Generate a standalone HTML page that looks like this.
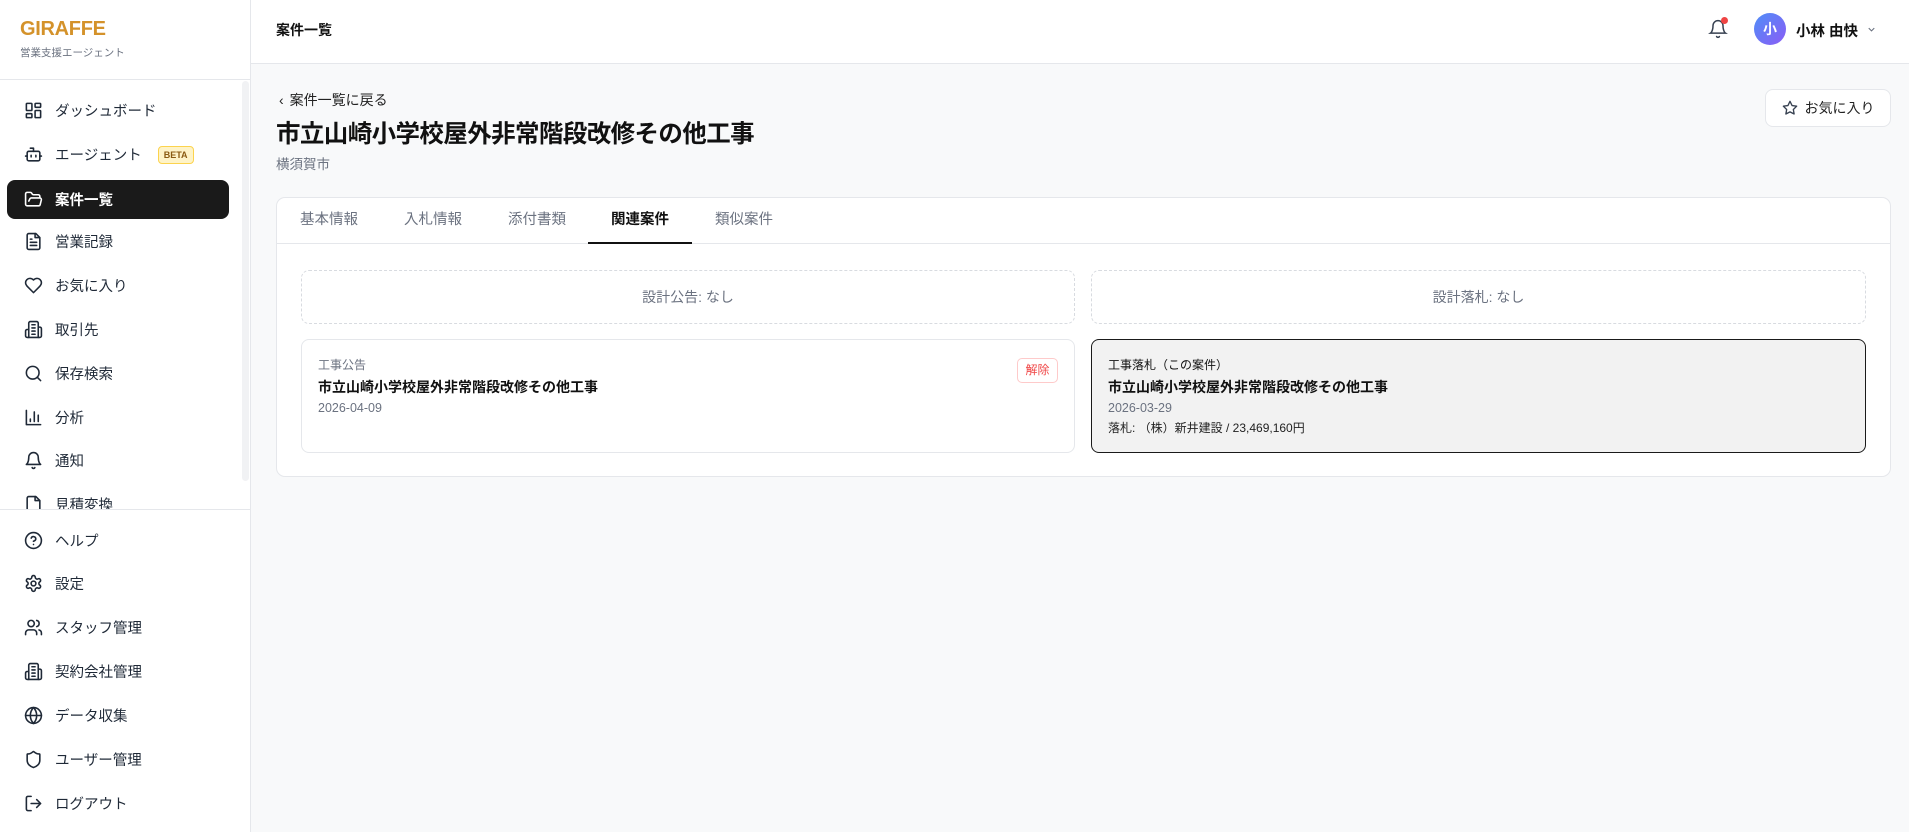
<!DOCTYPE html>
<html><head><meta charset="utf-8"><style>
*{box-sizing:border-box;margin:0;padding:0}
body{width:1909px;height:832px;overflow:hidden;font-family:"Liberation Sans","Noto Sans CJK JP",sans-serif;background:#f8f9fa;color:#111;position:relative}
.sb{position:absolute;left:0;top:0;width:251px;height:832px;background:#fff;border-right:1px solid #e5e7eb}
.logo{position:absolute;left:20px;top:18px;font-weight:700;font-size:20px;color:#d4922a;letter-spacing:-0.3px}
.logosub{position:absolute;left:20px;top:45px;font-size:10.5px;color:#6b7280}
.div1{position:absolute;left:0;top:79px;width:250px;height:1px;background:#e5e7eb}
.div2{position:absolute;left:0;top:509px;width:250px;height:1px;background:#e5e7eb}
.scroll{position:absolute;left:242px;top:81px;width:7px;height:400px;background:#f1f2f4;border-radius:4px}
.nav{position:absolute;left:0;width:250px;overflow:hidden}
.it{position:absolute;left:7px;width:222px;height:39px;display:flex;align-items:center;padding-left:17px;font-size:14.5px;color:#1f2937}
.it svg{width:19px;height:19px;margin-right:12px;fill:none;stroke:#1f2937;stroke-width:2;stroke-linecap:round;stroke-linejoin:round;flex:none}
.it.act{background:#1a1a1a;color:#fff;border-radius:8px;font-weight:700}
.it.act svg{stroke:#fff}
.beta{margin-left:16px;font-size:9px;font-weight:700;color:#8a5a12;background:#fef3c7;border:1px solid #fcd34d;border-radius:4px;padding:3px 5px}
.hd{position:absolute;left:251px;top:0;right:0;height:64px;background:#fff;border-bottom:1px solid #e5e7eb}
.hd .t{position:absolute;left:25px;top:20px;font-size:14px;font-weight:700}
.av{position:absolute;left:1754px;top:13px;width:32px;height:32px;border-radius:50%;background:linear-gradient(135deg,#4f8ef7,#8b5cf6);color:#fff;font-size:14px;display:flex;align-items:center;justify-content:center;font-weight:700}
.nm{position:absolute;left:1796px;top:20px;font-size:14.5px;font-weight:700}
.back{position:absolute;left:279px;top:90px;font-size:14px;color:#222}
.title{position:absolute;left:276px;top:115px;font-size:24.5px;font-weight:700;letter-spacing:-0.6px}
.city{position:absolute;left:276px;top:153px;font-size:13.5px;color:#6b7280}
.fav{position:absolute;left:1765px;top:89px;width:126px;height:38px;background:#fff;border:1px solid #e5e7eb;border-radius:8px;display:flex;align-items:center;justify-content:center;font-size:14px;color:#222}
.card{position:absolute;left:276px;top:197px;width:1615px;height:280px;background:#fff;border:1px solid #e5e7eb;border-radius:9px}
.tabs{position:absolute;left:0;top:0;right:0;height:46px;border-bottom:1px solid #e5e7eb}
.tab{position:absolute;top:0;width:104px;height:46px;text-align:center;line-height:44px;font-size:14.5px;color:#6b7280}
.tab.a{color:#111;font-weight:700;border-bottom:2px solid #111}
.dash{position:absolute;top:72px;height:54px;border:1px dashed #d8dbe0;border-radius:8px;text-align:center;line-height:52px;font-size:14px;color:#6b7280}
.rc{position:absolute;top:141px;height:114px;border:1px solid #e5e7eb;border-radius:8px;padding:15px 16px}
.rc .l{font-size:12px;color:#6b7280;margin-top:1px}
.rc .h{font-size:14px;font-weight:700;margin-top:4px}
.rc .d{font-size:12.5px;color:#6b7280;margin-top:4px}
.rc .w{font-size:12px;color:#222;margin-top:4px}
.rm{position:absolute;right:16px;top:18px;width:41px;height:25px;border:1px solid #fecaca;border-radius:5px;color:#ef4444;font-size:12px;text-align:center;line-height:23px}
</style></head><body>
<div class="sb">
<div class="logo">GIRAFFE</div>
<div class="logosub">営業支援エージェント</div>
<div class="div1"></div>
<div class="scroll"></div>
<div class="nav" style="top:80px;height:429px">
<div class="it" style="top:11px"><svg viewBox="0 0 24 24"><rect x="3" y="3" width="7" height="9" rx="1"/><rect x="14" y="3" width="7" height="5" rx="1"/><rect x="14" y="12" width="7" height="9" rx="1"/><rect x="3" y="16" width="7" height="5" rx="1"/></svg>ダッシュボード</div>
<div class="it" style="top:55px"><svg viewBox="0 0 24 24"><path d="M12 8V4H8"/><rect x="4" y="8" width="16" height="12" rx="2"/><path d="M2 14h2M20 14h2M15 13v2M9 13v2"/></svg>エージェント<span class="beta">BETA</span></div>
<div class="it act" style="top:100px"><svg viewBox="0 0 24 24"><path d="M6 14l1.5-2.9A2 2 0 0 1 9.2 10H20a2 2 0 0 1 1.9 2.5l-1.5 6A2 2 0 0 1 18.5 20H4a2 2 0 0 1-2-2V5a2 2 0 0 1 2-2h3.9a2 2 0 0 1 1.7.9l.8 1.2a2 2 0 0 0 1.7.9H18a2 2 0 0 1 2 2v2"/></svg>案件一覧</div>
<div class="it" style="top:142px"><svg viewBox="0 0 24 24"><path d="M15 2H6a2 2 0 0 0-2 2v16a2 2 0 0 0 2 2h12a2 2 0 0 0 2-2V7z"/><path d="M14 2v5h5M16 13H8M16 17H8M10 9H8"/></svg>営業記録</div>
<div class="it" style="top:186px"><svg viewBox="0 0 24 24"><path d="M19 14c1.5-1.5 3-3.2 3-5.5A5.5 5.5 0 0 0 16.5 3c-1.8 0-3 .5-4.5 2-1.5-1.5-2.7-2-4.5-2A5.5 5.5 0 0 0 2 8.5c0 2.3 1.5 4 3 5.5l7 7z"/></svg>お気に入り</div>
<div class="it" style="top:230px"><svg viewBox="0 0 24 24"><path d="M6 22V4a2 2 0 0 1 2-2h8a2 2 0 0 1 2 2v18z"/><path d="M6 12H4a2 2 0 0 0-2 2v6a2 2 0 0 0 2 2h2M18 9h2a2 2 0 0 1 2 2v9a2 2 0 0 1-2 2h-2M10 6h4M10 10h4M10 14h4M10 18h4"/></svg>取引先</div>
<div class="it" style="top:274px"><svg viewBox="0 0 24 24"><circle cx="11" cy="11" r="8"/><path d="M21 21l-4.3-4.3"/></svg>保存検索</div>
<div class="it" style="top:318px"><svg viewBox="0 0 24 24"><path d="M3 3v18h18M18 17V9M13 17V5M8 17v-3"/></svg>分析</div>
<div class="it" style="top:361px"><svg viewBox="0 0 24 24"><path d="M6 8a6 6 0 0 1 12 0c0 7 3 9 3 9H3s3-2 3-9M10.3 21a1.9 1.9 0 0 0 3.4 0"/></svg>通知</div>
<div class="it" style="top:405px"><svg viewBox="0 0 24 24"><path d="M15 2H6a2 2 0 0 0-2 2v16a2 2 0 0 0 2 2h12a2 2 0 0 0 2-2V7z"/><path d="M14 2v5h5"/></svg>見積変換</div>
</div>
<div class="div2"></div>
<div class="nav" style="top:510px;height:322px">
<div class="it" style="top:11px"><svg viewBox="0 0 24 24"><circle cx="12" cy="12" r="10"/><path d="M9.1 9a3 3 0 0 1 5.8 1c0 2-3 3-3 3M12 17h.01"/></svg>ヘルプ</div>
<div class="it" style="top:54px"><svg viewBox="0 0 24 24"><circle cx="12" cy="12" r="3"/><path d="M12.2 2h-.4a2 2 0 0 0-2 2v.2a2 2 0 0 1-1 1.7l-.4.3a2 2 0 0 1-2 0l-.2-.1a2 2 0 0 0-2.7.7l-.2.4a2 2 0 0 0 .7 2.7l.2.1a2 2 0 0 1 1 1.7v.5a2 2 0 0 1-1 1.7l-.2.1a2 2 0 0 0-.7 2.7l.2.4a2 2 0 0 0 2.7.7l.2-.1a2 2 0 0 1 2 0l.4.3a2 2 0 0 1 1 1.7v.2a2 2 0 0 0 2 2h.4a2 2 0 0 0 2-2v-.2a2 2 0 0 1 1-1.7l.4-.3a2 2 0 0 1 2 0l.2.1a2 2 0 0 0 2.7-.7l.2-.4a2 2 0 0 0-.7-2.7l-.2-.1a2 2 0 0 1-1-1.7v-.5a2 2 0 0 1 1-1.7l.2-.1a2 2 0 0 0 .7-2.7l-.2-.4a2 2 0 0 0-2.7-.7l-.2.1a2 2 0 0 1-2 0l-.4-.3a2 2 0 0 1-1-1.7V4a2 2 0 0 0-2-2z"/></svg>設定</div>
<div class="it" style="top:98px"><svg viewBox="0 0 24 24"><path d="M16 21v-2a4 4 0 0 0-4-4H6a4 4 0 0 0-4 4v2"/><circle cx="9" cy="7" r="4"/><path d="M22 21v-2a4 4 0 0 0-3-3.9M16 3.1a4 4 0 0 1 0 7.8"/></svg>スタッフ管理</div>
<div class="it" style="top:142px"><svg viewBox="0 0 24 24"><path d="M6 22V4a2 2 0 0 1 2-2h8a2 2 0 0 1 2 2v18z"/><path d="M6 12H4a2 2 0 0 0-2 2v6a2 2 0 0 0 2 2h2M18 9h2a2 2 0 0 1 2 2v9a2 2 0 0 1-2 2h-2M10 6h4M10 10h4M10 14h4M10 18h4"/></svg>契約会社管理</div>
<div class="it" style="top:186px"><svg viewBox="0 0 24 24"><circle cx="12" cy="12" r="10"/><path d="M12 2a14.5 14.5 0 0 0 0 20 14.5 14.5 0 0 0 0-20M2 12h20"/></svg>データ収集</div>
<div class="it" style="top:230px"><svg viewBox="0 0 24 24"><path d="M20 13c0 5-3.5 7.5-7.7 9a1 1 0 0 1-.7 0C7.5 20.5 4 18 4 13V6a1 1 0 0 1 1-1c2 0 4.5-1.2 6.2-2.700a1.2 1.2 0 0 1 1.5 0C14.5 3.8 17 5 19 5a1 1 0 0 1 1 1z"/></svg>ユーザー管理</div>
<div class="it" style="top:274px"><svg viewBox="0 0 24 24"><path d="M9 21H5a2 2 0 0 1-2-2V5a2 2 0 0 1 2-2h4M16 17l5-5-5-5M21 12H9"/></svg>ログアウト</div>
</div>
</div>
<div class="hd"><div class="t">案件一覧</div>
<svg style="position:absolute;left:1457px;top:18px" width="20" height="22" viewBox="0 0 24 24" fill="none" stroke="#374151" stroke-width="1.8" stroke-linecap="round"><path d="M6 8a6 6 0 0 1 12 0c0 7 3 9 3 9H3s3-2 3-9M10.3 21a1.9 1.9 0 0 0 3.4 0"/></svg>
<div style="position:absolute;left:1470px;top:17px;width:7px;height:7px;border-radius:50%;background:#ef4444"></div>
</div>
<div class="av">小</div>
<div class="nm">小林 由快</div>
<svg style="position:absolute;left:1866px;top:24px" width="11" height="11" viewBox="0 0 24 24" fill="none" stroke="#6b7280" stroke-width="2.5"><path d="M6 9l6 6 6-6"/></svg>
<div class="back"><span style="display:inline-block;margin-right:6px">‹</span>案件一覧に戻る</div>
<div class="title">市立山崎小学校屋外非常階段改修その他工事</div>
<div class="city">横須賀市</div>
<div class="fav"><svg width="16" height="16" viewBox="0 0 24 24" fill="none" stroke="#374151" stroke-width="2" stroke-linejoin="round" style="margin-right:7px"><path d="M12 2l3.1 6.3 6.9 1-5 4.9 1.2 6.8L12 17.8 5.8 21l1.2-6.8-5-4.9 6.9-1z"/></svg>お気に入り</div>
<div class="card">
<div class="tabs">
<div class="tab" style="left:0">基本情報</div>
<div class="tab" style="left:104px">入札情報</div>
<div class="tab" style="left:208px">添付書類</div>
<div class="tab a" style="left:311px">関連案件</div>
<div class="tab" style="left:415px">類似案件</div>
</div>
<div class="dash" style="left:24px;width:774px">設計公告: なし</div>
<div class="dash" style="left:814px;width:775px">設計落札: なし</div>
<div class="rc" style="left:24px;width:774px">
<div class="l">工事公告</div><div class="h">市立山崎小学校屋外非常階段改修その他工事</div><div class="d">2026-04-09</div>
<div class="rm">解除</div></div>
<div class="rc" style="left:814px;width:775px;background:#f2f2f2;border:1.5px solid #1a1a1a">
<div class="l" style="color:#111">工事落札（この案件）</div><div class="h">市立山崎小学校屋外非常階段改修その他工事</div><div class="d">2026-03-29</div><div class="w">落札: （株）新井建設 / 23,469,160円</div></div>
</div>
</body></html>
